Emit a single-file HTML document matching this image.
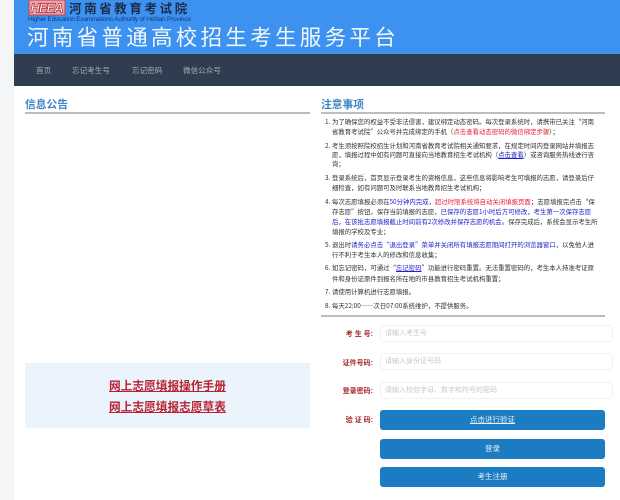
<!DOCTYPE html>
<html lang="zh">
<head>
<meta charset="utf-8">
<style>
html,body{margin:0;padding:0;width:620px;height:500px;overflow:hidden;background:#fff;font-family:"Liberation Sans","Noto Sans CJK SC",sans-serif}
#w{position:absolute;left:0;top:0;width:620px;height:500px;background:#fff;filter:blur(.35px)}
.a{position:absolute;white-space:nowrap}
#strip{left:0;top:0;width:14px;height:500px;background:#f4f5f7}
#hd{left:14px;top:0;width:606px;height:54px;background:#3c92ee}
#nav{left:14px;top:54px;width:606px;height:32px;background:#2e3e50}
.n{top:64px;font-size:7.6px;line-height:14px;color:#a3aeb9}
.h{font-size:10.75px;font-weight:bold;color:#3d85c6;line-height:14px}
.rule{height:1.5px;background:#bdbdbd}
.l{left:332px;font-family:"Noto Sans CJK SC",sans-serif;font-size:6.4px;line-height:10px;color:#333}
.l.f{left:325px}
.l i{display:inline-block;width:7px;font-style:normal}
.b{color:#2222cc}.r{color:#e8203a}.u{text-decoration:underline}
.lab{font-size:7px;font-weight:bold;color:#a5262b;line-height:10px;text-align:right;width:42px;left:331px}
.inp{left:380px;width:231px;height:15px;border:1px solid #f1f1f1;border-radius:3px;font-size:7px;line-height:15px;color:#c9c9c9;text-indent:4px;background:#fff}
.btn{left:380px;width:225px;height:20px;border-radius:3px;background:#1b7cc2;color:#e8f2fa;font-size:7.5px;line-height:20px;text-align:center}
.doc{left:25px;width:285px;text-align:center;font-size:11.7px;font-weight:bold;color:#b8232f;text-decoration:underline;line-height:14px}
</style>
</head>
<body>
<div id="w">
<div class="a" id="strip"></div>
<div class="a" id="hd"></div>
<div class="a" id="nav"></div>

<svg class="a" style="left:28px;top:0" width="38" height="16" viewBox="0 0 38 16">
<rect x="1" y="0" width="36" height="15" fill="#e9a3a8" stroke="#c8404a" stroke-width="1"/>
<text x="2.5" y="12.5" font-family="Liberation Sans" font-weight="bold" font-style="italic" font-size="13" fill="#ffffff" stroke="#b5202c" stroke-width=".7" textLength="33">HEEA</text>
</svg>
<div class="a" style="left:69px;top:0;font-size:12.5px;font-weight:bold;line-height:18px;letter-spacing:2.6px;color:#1c2a4a">河南省教育考试院</div>
<div class="a" style="left:28px;top:15px;font-size:6.5px;line-height:9px;color:#123c86;letter-spacing:-.2px">Higher Education Examinations Authority of HeNan Province</div>
<div class="a" style="left:27px;top:25px;font-size:21.5px;line-height:27px;letter-spacing:3.3px;color:#f2f7fd">河南省普通高校招生考生服务平台</div>

<div class="a n" style="left:36px">首页</div>
<div class="a n" style="left:72px">忘记考生号</div>
<div class="a n" style="left:132px">忘记密码</div>
<div class="a n" style="left:183px">微信公众号</div>

<div class="a h" style="left:25px;top:98px">信息公告</div>
<div class="a rule" style="left:25px;top:112px;width:285px"></div>
<div class="a h" style="left:321px;top:98px">注意事项</div>
<div class="a rule" style="left:321px;top:112px;width:284px"></div>
<div class="a rule" style="left:321px;top:315px;width:284px;height:2px"></div>

<div class="a" style="left:25px;top:363px;width:285px;height:65px;background:#ebf3fd"></div>
<div class="a doc" style="top:380px">网上志愿填报操作手册</div>
<div class="a doc" style="top:401px">网上志愿填报志愿草表</div>

<div class="a l f" style="top:117px"><i>1.</i>为了确保您的权益不受非法侵害，建议绑定动态密码。每次登录系统时，请携带已关注“河南</div>
<div class="a l" style="top:127px">省教育考试院”公众号并完成绑定的手机（<span class="r">点击查看动态密码的微信绑定步骤</span>）；</div>
<div class="a l f" style="top:141px"><i>2.</i>考生须按照院校招生计划和河南省教育考试院相关通知要求，在规定时间内登录网站并填报志</div>
<div class="a l" style="top:150px">愿，填报过程中如有问题可直接向当地教育招生考试机构（<span class="b u">点击查看</span>）或咨询服务热线进行咨</div>
<div class="a l" style="top:159px">询；</div>
<div class="a l f" style="top:173px"><i>3.</i>登录系统后，首页显示登录考生的资格信息，这些信息将影响考生可填报的志愿，请登录后仔</div>
<div class="a l" style="top:183px">细检查，如有问题可及时联系当地教育招生考试机构；</div>
<div class="a l f" style="top:197px"><i>4.</i>每次志愿填报必须在<span class="b">50分钟内完成</span>，<span class="r">超过时限系统将自动关闭填报页面</span>；志愿填报完点击“保</div>
<div class="a l" style="top:207px">存志愿”按钮，保存当前填报的志愿，<span class="b">已保存的志愿1小时后方可修改，考生第一次保存志愿</span></div>
<div class="a l" style="top:217px"><span class="b">后，在该批志愿填报截止时间前有2次修改并保存志愿的机会</span>。保存完成后，系统会显示考生所</div>
<div class="a l" style="top:227px">填报的学校及专业；</div>
<div class="a l f" style="top:240px"><i>5.</i>退出时<span class="b">请务必点击“退出登录”菜单并关闭所有填报志愿期间打开的浏览器窗口</span>，以免他人进</div>
<div class="a l" style="top:250px">行不利于考生本人的修改和信息收集；</div>
<div class="a l f" style="top:263px"><i>6.</i>如忘记密码，可通过“<span class="b u">忘记密码</span>”功能进行密码重置。无法重置密码的，考生本人持准考证原</div>
<div class="a l" style="top:274px">件和身份证原件到报名所在地的市县教育招生考试机构重置；</div>
<div class="a l f" style="top:287px"><i>7.</i>请使用计算机进行志愿填报。</div>
<div class="a l f" style="top:301px"><i>8.</i>每天22:00——次日07:00系统维护，不提供服务。</div>

<div class="a lab" style="top:330px">考 生 号:</div>
<div class="a inp" style="top:325px">请输入考生号</div>
<div class="a lab" style="top:359px">证件号码:</div>
<div class="a inp" style="top:353px">请输入身份证号码</div>
<div class="a lab" style="top:387px">登录密码:</div>
<div class="a inp" style="top:382px">请输入校验字母、数字和符号的密码</div>
<div class="a lab" style="top:416px">验 证 码:</div>
<div class="a btn u" style="top:410px">点击进行验证</div>
<div class="a btn" style="top:439px">登录</div>
<div class="a btn" style="top:467px">考生注册</div>
</div>
</body>
</html>
